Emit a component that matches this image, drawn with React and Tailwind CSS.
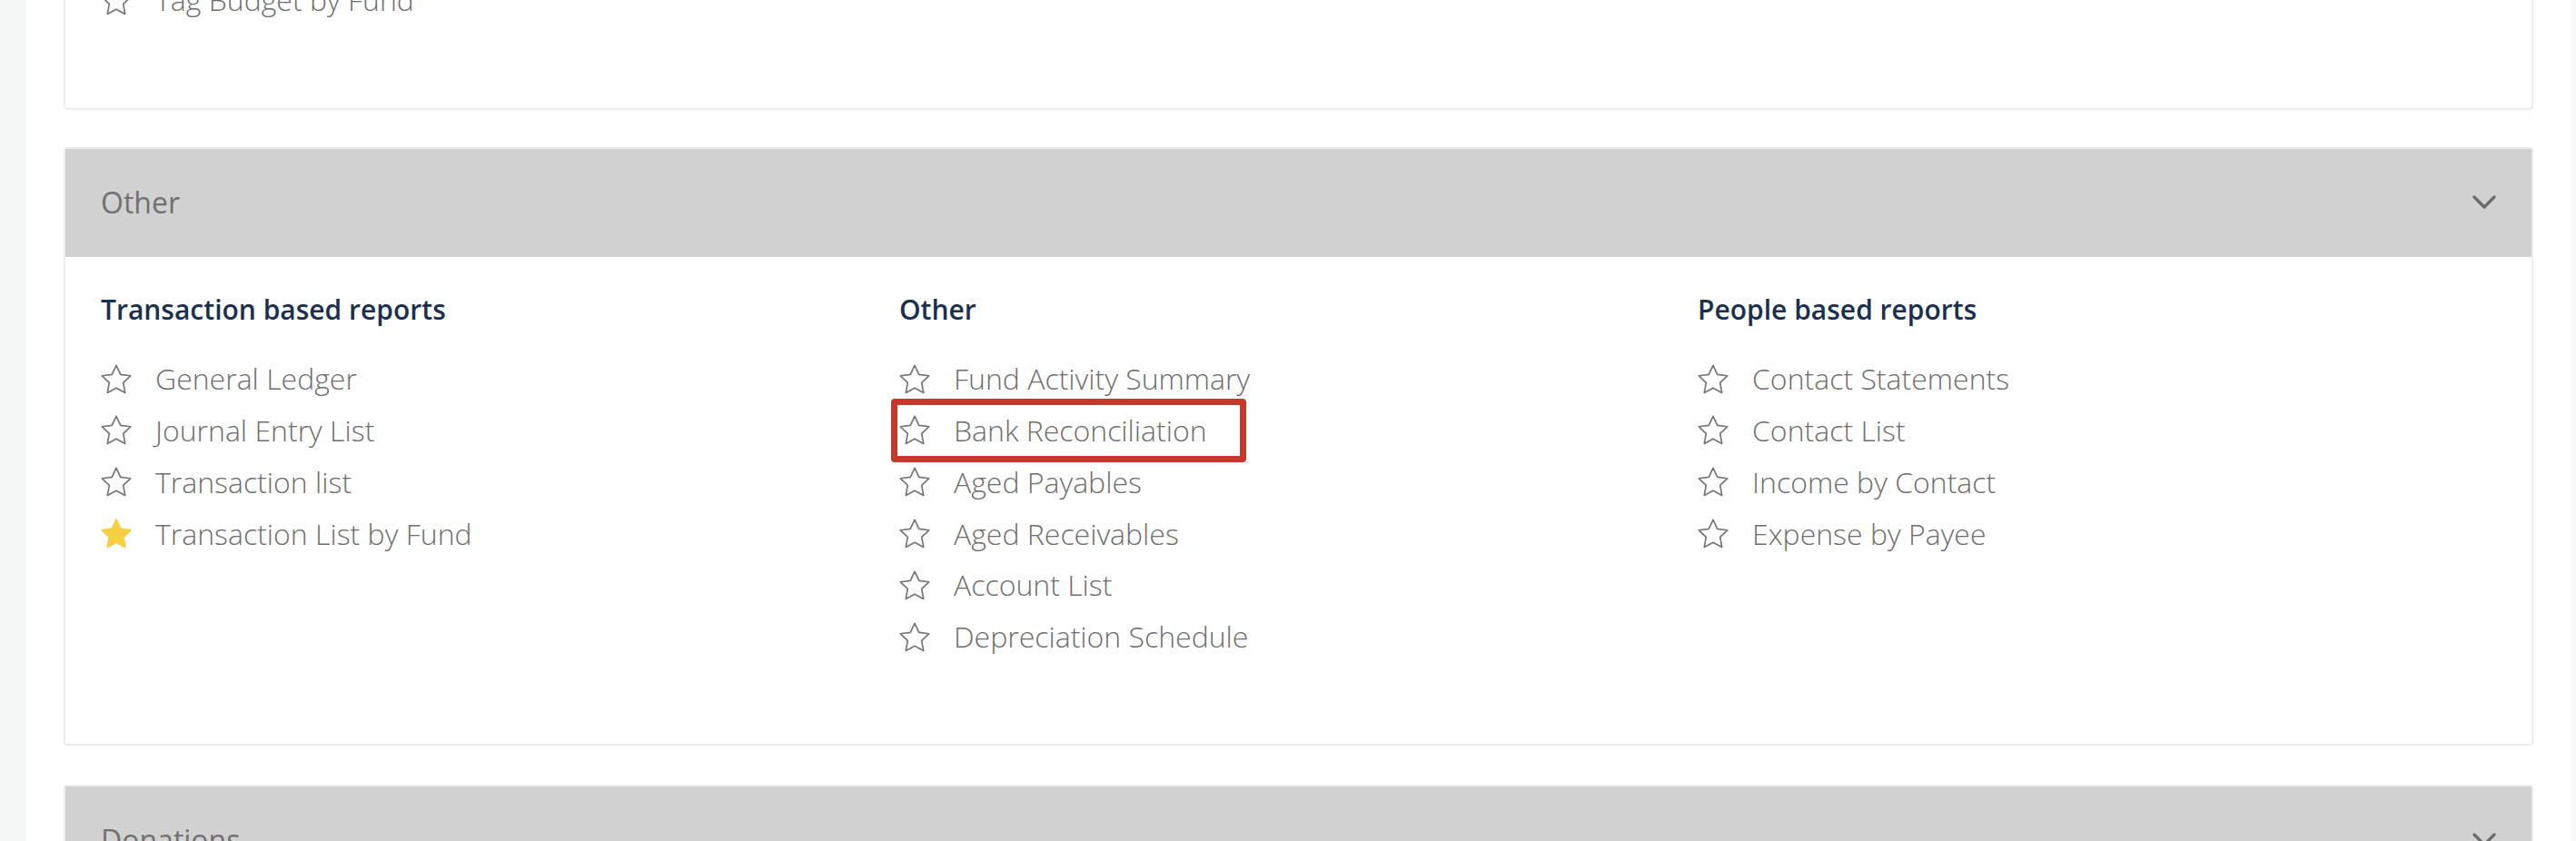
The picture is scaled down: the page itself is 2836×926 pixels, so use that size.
import { useState } from "react";

const sections = [
  {
    title: "Transaction based reports",
    items: [
      { name: "General Ledger" },
      { name: "Journal Entry List" },
      { name: "Transaction list" },
      { name: "Transaction List by Fund", fav: true },
    ],
  },
  {
    title: "Other",
    items: [
      { name: "Fund Activity Summary" },
      { name: "Bank Reconciliation", highlight: true },
      { name: "Aged Payables" },
      { name: "Aged Receivables" },
      { name: "Account List" },
      { name: "Depreciation Schedule" },
    ],
  },
  {
    title: "People based reports",
    items: [
      { name: "Contact Statements" },
      { name: "Contact List" },
      { name: "Income by Contact" },
      { name: "Expense by Payee" },
    ],
  },
];

const StarIcon = ({ filled }) => (
  <svg width="34" height="33" viewBox="1.5 1.5 21 20.2" className="shrink-0">
    <polygon
      points="12,2.2 14.95,8.4 21.7,9.3 16.75,14 18,20.8 12,17.55 6,20.8 7.25,14 2.3,9.3 9.05,8.4"
      fill={filled ? "#f5d142" : "none"}
      stroke={filled ? "#f5d142" : "#767676"}
      strokeWidth={filled ? "1.2" : "1.05"}
      strokeLinejoin="round"
    />
  </svg>
);

const Chevron = () => (
  <svg width="26" height="16" viewBox="0 0 26 16" className="shrink-0">
    <path
      d="M2 2 L13 13 L24 2"
      fill="none"
      stroke="#6b6b6b"
      strokeWidth="3.2"
      strokeLinecap="round"
      strokeLinejoin="round"
    />
  </svg>
);

const ReportItem = ({ item }) => (
  <div className="relative flex items-center h-[56.8px]">
    <StarIcon filled={item.fav} />
    <span className="ml-[26px] text-[32px] font-light text-[#6e6e6e] leading-none whitespace-nowrap">
      {item.name}
    </span>
    {item.highlight && (
      <div className="absolute -left-[9px] top-[-7px] w-[391px] h-[70px] border-[7px] border-[#c8372b] rounded-[4px]" />
    )}
  </div>
);

const CardHeader = ({ title }) => (
  <div className="flex items-center justify-between h-[119px] px-[39px] bg-[#d1d1d1]">
    <span className="text-[32px] font-normal text-[#707070] leading-none">{title}</span>
    <Chevron />
  </div>
);

const App = () => {
  const [open] = useState(true);

  return (
    <div
      className="flex w-[2836px] h-[926px] overflow-hidden bg-white"
      style={{ fontFamily: "'Open Sans', 'Liberation Sans', sans-serif" }}
    >
      <div className="w-[29px] shrink-0 bg-[#f6f7f7]" />

      <div className="flex-1 px-[41px]">
        {/* previous card, scrolled mostly out of view */}
        <div className="-mt-[30px] border-2 border-[#ececec] rounded-[4px] bg-white">
          <div className="px-[39px] pb-[90px]">
            <ReportItem item={{ name: "Tag Budget by Fund" }} />
          </div>
        </div>

        {/* OTHER */}
        <div className="mt-[41px] border-2 border-[#ececec] rounded-[4px] bg-white">
          <CardHeader title="Other" />
          {open && (
            <div className="grid grid-cols-3 px-[39px] pt-[38px] pb-[89px]">
              {sections.map((section) => (
                <div key={section.title}>
                  <h3 className="h-[40px] flex items-center text-[30px] font-semibold text-[#1b2f50] leading-none whitespace-nowrap">
                    {section.title}
                  </h3>
                  <div className="mt-[28px]">
                    {section.items.map((item) => (
                      <ReportItem key={item.name} item={item} />
                    ))}
                  </div>
                </div>
              ))}
            </div>
          )}
        </div>

        {/* DONATIONS */}
        <div className="mt-[43px] border-2 border-[#ececec] rounded-[4px] bg-white">
          <CardHeader title="Donations" />
        </div>
      </div>

      <div className="w-[6px] shrink-0 bg-[#f6f7f7]" />
    </div>
  );
};

export default App;
